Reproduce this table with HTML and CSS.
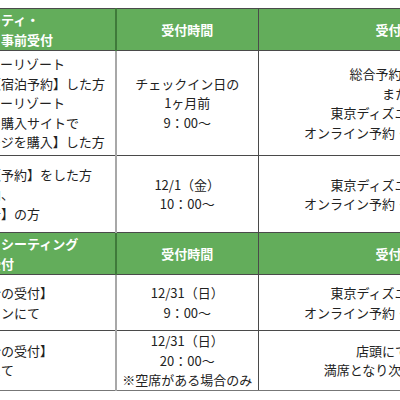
FILE: index.html
```html
<!DOCTYPE html>
<html lang="ja">
<head>
<meta charset="utf-8">
<link rel="stylesheet" href="styles.css">
</head>
<body>
<table class="sched">
  <colgroup><col class="c1"><col class="c2"><col class="c3"></colgroup>
  <tr class="head h-a">
    <th class="first">ショー・パーティ・<br>レストラン・事前受付</th>
    <th>受付時間</th>
    <th>受付方法</th>
  </tr>
  <tr class="r1">
    <td class="first">東京ディズニーリゾート<br>各ホテルで【宿泊予約】した方<br>東京ディズニーリゾート<br>ネット予約・購入サイトで<br>旅行パッケージを購入】した方</td>
    <td>チェックイン日の<br>1ヶ月前<br>9：00〜</td>
    <td>総合予約センター<br>または<br>東京ディズニーリゾート<br>オンライン予約・購入サイトにて</td>
  </tr>
  <tr class="r2">
    <td class="first">各ホテルで【予約】をした方<br>ホテルに宿泊、<br>【宿泊予約者】の方</td>
    <td>12/1（金）<br>10：00〜</td>
    <td>東京ディズニーリゾート<br>オンライン予約・購入サイトにて</td>
  </tr>
  <tr class="head h-b">
    <th class="first">レストラン・シーティング<br>当日・事前受付</th>
    <th>受付時間</th>
    <th>受付方法</th>
  </tr>
  <tr class="r3">
    <td class="first">【先行予約分の受付】<br>公式オンラインにて</td>
    <td>12/31（日）<br>9：00〜</td>
    <td>東京ディズニーリゾート<br>オンライン予約・購入サイトにて</td>
  </tr>
  <tr class="r4">
    <td class="first">【当日空席分の受付】<br>レストランにて</td>
    <td>12/31（日）<br>20：00〜<br>※空席がある場合のみ</td>
    <td>店頭にて受付け<br>満席となり次第終了します</td>
  </tr>
</table>
</body>
</html>
```

FILE: styles.css
```css
html, body {
  margin: 0;
  padding: 0;
  background: #ffffff;
  overflow: hidden;
}

body {
  width: 400px;
  height: 400px;
  font-family: "Noto Sans CJK JP", "Noto Sans", sans-serif;
  font-size: 13px;
  line-height: 19.5px;
  color: #222222;
}

.sched {
  border-collapse: collapse;
  margin: 8px 0 0 -83px;
  table-layout: fixed;
  width: 627px;
}

.c1 { width: 198px; }
.c2 { width: 143px; }
.c3 { width: 286px; }

.sched th,
.sched td {
  padding: 0;
  text-align: center;
  vertical-align: middle;
  white-space: nowrap;
  overflow: hidden;
  border: 1px solid #4a4a4a;
}

.sched .first {
  text-align: left;
  padding-left: 5px;
}

.sched td.first {
  border-right: 2px solid #a8a8a8;
}

.head th {
  background: #63ad5b;
  color: #ffffff;
  font-weight: 700;
}

.head th.first {
  border-right: 2px solid #3f7a3a;
}

.h-a { height: 42px; }
.r1 { height: 105px; }
.r2 { height: 77px; }
.h-b { height: 42px; }
.r3 { height: 56px; }
.r4 { height: 58px; }

.r4 td {
  border-bottom-color: #777777;
}
```
